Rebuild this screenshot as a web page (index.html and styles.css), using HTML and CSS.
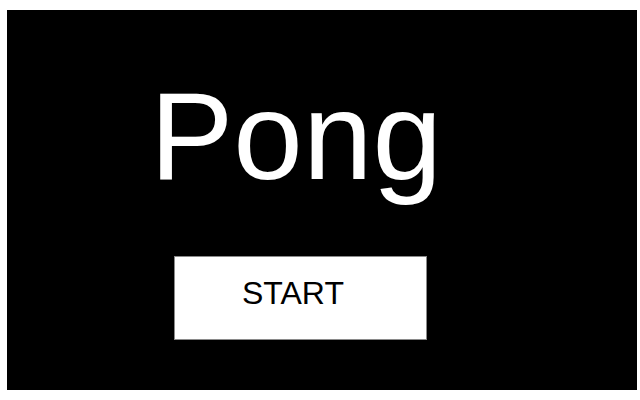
FILE: index.html
```html
<!DOCTYPE html>
<html>
<head>
<meta charset="utf-8">
<link rel="stylesheet" href="styles.css">
</head>
<body>
<div class="stage">
  <h1 class="title">Pong</h1>
  <div class="start">START</div>
</div>
</body>
</html>
```
FILE: styles.css
```css
html, body {
  margin: 0;
  padding: 0;
  background: #ffffff;
}
body {
  padding: 10px 3px 10px 7px;
  font-family: "Liberation Sans", Arial, sans-serif;
}
.stage {
  width: 630px;
  height: 380px;
  background: #000000;
  display: flex;
  flex-direction: column;
  align-items: flex-start;
  box-sizing: border-box;
}
.title {
  margin: 63px 0 0 143px;
  font-size: 125px;
  line-height: 125px;
  font-weight: normal;
  color: #ffffff;
}
.start {
  margin: 58px 0 0 167px;
  width: 253px;
  height: 84px;
  box-sizing: border-box;
  background: #ffffff;
  border: 1px solid #8a8a8a;
  color: #000000;
  font-size: 32px;
  line-height: 32px;
  padding: 20px 0 0 67px;
}
```
